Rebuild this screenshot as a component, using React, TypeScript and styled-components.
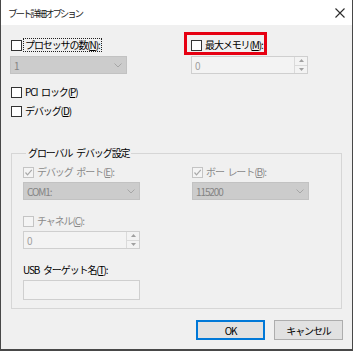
import React from 'react';
import styled, { createGlobalStyle } from 'styled-components';

const GlobalStyle = createGlobalStyle`
  html, body {
    margin: 0;
    padding: 0;
    background: #ffffff;
  }
  body {
    font-family: "Noto Sans CJK JP", "Noto Sans", sans-serif;
  }
`;

type CheckProps = {
  label: React.ReactNode;
  checked?: boolean;
  disabled?: boolean;
  focused?: boolean;
  highlight?: boolean;
  inset?: boolean;
};

const Check = ({ label, checked, disabled, focused, highlight, inset }: CheckProps) => (
  <CheckRow inset={inset}>
    {highlight && <Highlight />}
    <Box disabled={disabled}>
      {checked && (
        <svg width="9" height="9" viewBox="0 0 9 9">
          <polyline points="1.5,4.5 3.5,6.8 7.8,1.8" fill="none" stroke="#a8a8a8" strokeWidth="1.2" />
        </svg>
      )}
    </Box>
    <Label disabled={disabled} focused={focused}>
      {label}
    </Label>
  </CheckRow>
);

const Select = ({ value }: { value: string }) => (
  <SelectBox>
    <span>{value}</span>
    <svg width="8" height="5" viewBox="0 0 8 5">
      <polyline points="0.5,0.5 4,4 7.5,0.5" fill="none" stroke="#a6a6a6" strokeWidth="1" />
    </svg>
  </SelectBox>
);

const Spin = ({ value }: { value: string }) => (
  <SpinBox>
    <SpinValue>{value}</SpinValue>
    <SpinButtons>
      <SpinHalf>
        <svg width="5" height="3" viewBox="0 0 5 3">
          <polygon points="0,3 2.5,0 5,3" fill="#a0a0a0" />
        </svg>
      </SpinHalf>
      <SpinHalf>
        <svg width="5" height="3" viewBox="0 0 5 3">
          <polygon points="0,0 2.5,3 5,0" fill="#a0a0a0" />
        </svg>
      </SpinHalf>
    </SpinButtons>
  </SpinBox>
);

export default function App() {
  return (
    <>
      <GlobalStyle />
      <Window>
        <TitleBar>
          <Title>ブート詳細オプション</Title>
          <svg width="10" height="10" viewBox="0 0 10 10">
            <path d="M0.5 0.5 L9.5 9.5 M9.5 0.5 L0.5 9.5" stroke="#2b2b2b" strokeWidth="1.1" />
          </svg>
        </TitleBar>
        <Body>
          <TwoCols>
            <Check inset focused label={<>プロセッサの数(<u>N</u>):</>} />
            <Check highlight label={<>最大メモリ(<u>M</u>):</>} />
            <Select value="1" />
            <Spin value="0" />
          </TwoCols>
          <Stack>
            <Check inset label={<>PCI ロック(<u>P</u>)</>} />
            <Check inset label={<>デバッグ(<u>D</u>)</>} />
          </Stack>
          <Group>
            <Legend>グローバル デバッグ設定</Legend>
            <GroupCols>
              <Check checked disabled label={<>デバッグ ポート(<u>E</u>):</>} />
              <Check checked disabled label={<>ボー レート(<u>B</u>):</>} />
              <Select value="COM1:" />
              <Select value="115200" />
            </GroupCols>
            <Field>
              <Check disabled label={<>チャネル(<u>C</u>):</>} />
              <Spin value="0" />
            </Field>
            <Field>
              <FieldLabel>
                USB ターゲット名(<u>T</u>):
              </FieldLabel>
              <TextBox />
            </Field>
          </Group>
          <Buttons>
            <Button primary>OK</Button>
            <Button>キャンセル</Button>
          </Buttons>
        </Body>
      </Window>
    </>
  );
}

const Window = styled.div`
  width: 353px;
  height: 351px;
  box-sizing: border-box;
  border: 1px solid #484848;
  border-top: none;
  border-bottom-width: 2px;
  background: #f0f0f0;
  display: flex;
  flex-direction: column;
  font-size: 10px;
  letter-spacing: -1.1px;
  word-spacing: 2.5px;
  color: #000000;
  overflow: hidden;
`;

const TitleBar = styled.div`
  height: 25px;
  flex: none;
  background: #ffffff;
  display: flex;
  align-items: center;
  justify-content: space-between;
  padding: 0 7px 0 7px;
`;

const Title = styled.span`
  font-size: 9.5px;
  letter-spacing: -2.1px;
  color: #1a1a1a;
`;

const Body = styled.div`
  padding: 13px 9px 0 9px;
  display: flex;
  flex-direction: column;
`;

const TwoCols = styled.div`
  display: grid;
  grid-template-columns: 117px 117px;
  column-gap: 64px;
  row-gap: 4px;
`;

const Stack = styled.div`
  display: flex;
  flex-direction: column;
  gap: 5px;
  margin-top: 11px;
`;

const CheckRow = styled.div<{ inset?: boolean }>`
  position: relative;
  height: 14px;
  display: flex;
  align-items: center;
  padding-left: ${(p) => (p.inset ? '1px' : '0')};
  white-space: nowrap;
`;

const Highlight = styled.span`
  position: absolute;
  left: -7px;
  top: -6px;
  width: 77px;
  height: 17px;
  border: 3px solid #e60012;
`;

const Box = styled.span<{ disabled?: boolean }>`
  width: 11px;
  height: 11px;
  box-sizing: border-box;
  border: 1px solid ${(p) => (p.disabled ? '#c4c4c4' : '#333333')};
  background: ${(p) => (p.disabled ? '#f4f4f4' : '#ffffff')};
  display: flex;
  align-items: center;
  justify-content: center;
  margin-right: 2px;
  flex: none;
`;

const Label = styled.span<{ disabled?: boolean; focused?: boolean }>`
  color: ${(p) => (p.disabled ? '#8a8a8a' : '#000000')};
  outline: ${(p) => (p.focused ? '1px dotted #202020' : 'none')};
  outline-offset: 0;
  padding: 0 1px;
  line-height: 12px;
`;

const SelectBox = styled.div`
  height: 18px;
  box-sizing: border-box;
  border: 1px solid #c2c2c2;
  background: #cccccc;
  color: #848484;
  display: flex;
  align-items: center;
  justify-content: space-between;
  padding: 0 4px 0 3px;
`;

const SpinBox = styled.div`
  height: 18px;
  box-sizing: border-box;
  border: 1px solid #cfcfcf;
  background: #f3f3f3;
  color: #a0a0a0;
  display: flex;
  align-items: stretch;
`;

const SpinValue = styled.span`
  flex: 1;
  display: flex;
  align-items: center;
  padding-left: 3px;
`;

const SpinButtons = styled.div`
  width: 12px;
  border-left: 1px solid #dadada;
  display: flex;
  flex-direction: column;
`;

const SpinHalf = styled.div`
  flex: 1;
  display: flex;
  align-items: center;
  justify-content: center;
  & + & {
    border-top: 1px solid #dadada;
  }
`;

const Group = styled.fieldset`
  margin: 28px 1px 0 1px;
  padding: 5px 11px 8px 11px;
  border: 1px solid #d6d6d6;
  min-width: 0;
`;

const Legend = styled.legend`
  padding: 0 2px;
  margin-left: 3px;
  line-height: 14px;
`;

const GroupCols = styled.div`
  display: grid;
  grid-template-columns: 117px 117px;
  column-gap: 52px;
  row-gap: 3px;
`;

const Field = styled.div`
  width: 117px;
  display: flex;
  flex-direction: column;
  gap: 3px;
  margin-top: 14px;
`;

const FieldLabel = styled.div`
  height: 14px;
  line-height: 14px;
  white-space: nowrap;
`;

const TextBox = styled.div`
  height: 20px;
  box-sizing: border-box;
  border: 1px solid #cfcfcf;
  background: #f3f3f3;
`;

const Buttons = styled.div`
  display: flex;
  justify-content: flex-end;
  gap: 9px;
  margin-top: 11px;
`;

const Button = styled.button<{ primary?: boolean }>`
  width: 69px;
  height: 20px;
  box-sizing: border-box;
  margin: 0;
  padding: 0;
  font-family: inherit;
  font-size: 10px;
  letter-spacing: -1.1px;
  color: #000000;
  background: #e1e1e1;
  border: ${(p) => (p.primary ? '2px solid #0078d7' : '1px solid #adadad')};
`;
